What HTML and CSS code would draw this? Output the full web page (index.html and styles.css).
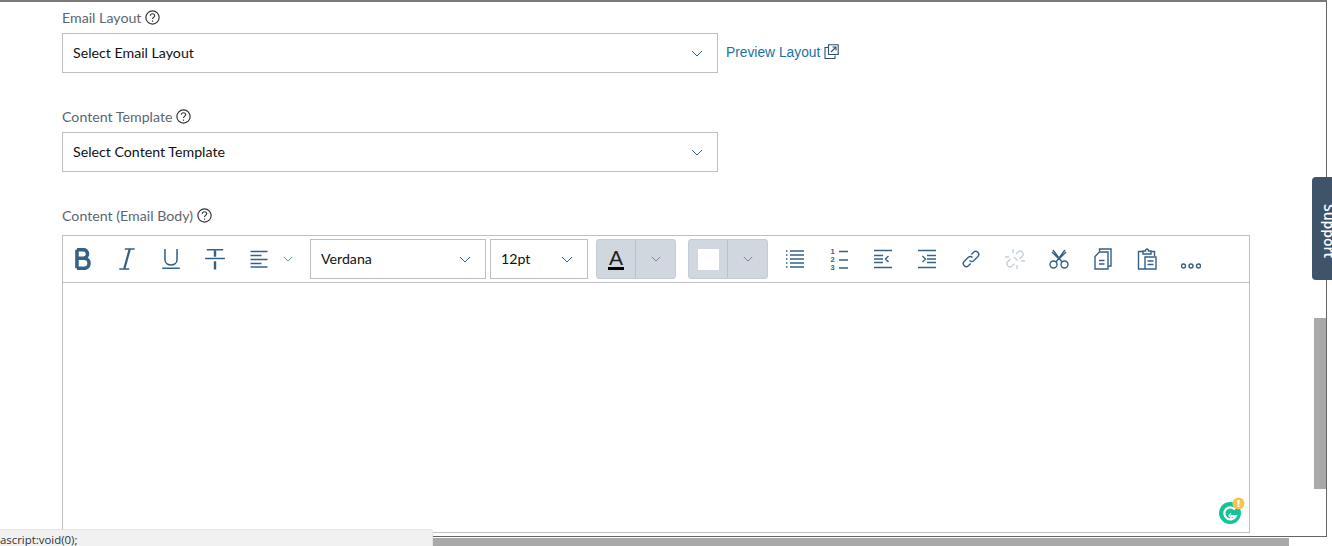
FILE: index.html
```html
<!DOCTYPE html>
<html lang="en">
<head>
<meta charset="utf-8">
<title>Email content</title>
<link rel="stylesheet" href="styles.css">
</head>
<body>
<div class="frame">
  <div class="field field-layout">
    <div class="label">Email Layout <svg class="help" viewBox="0 0 14 14"><circle cx="7" cy="7" r="6.2"/><path d="M5 5.400C5 4.200 5.900 3.500 7 3.500s2 .7 2 1.800c0 1.600-2 1.600-2 3.200"/><path d="M7 9.800v1.200"/></svg></div>
    <div class="row">
      <div class="select wide"><span>Select Email Layout</span><svg class="chev" viewBox="0 0 12 7"><path d="M1 1l5 5 5-5"/></svg></div>
      <a class="preview">Preview Layout <svg class="ext" viewBox="0 0 15 15"><path class="dark" d="M4 3.500H1v11h10v-3"/><path class="dark" d="M4.500.8h9.700v9.700H4.500z"/><path class="dark" d="M7 8l5-5M8.500 3H12v3.500"/></svg></a>
    </div>
  </div>
  <div class="field field-template">
    <div class="label">Content Template <svg class="help" viewBox="0 0 14 14"><circle cx="7" cy="7" r="6.2"/><path d="M5 5.400C5 4.200 5.900 3.500 7 3.500s2 .7 2 1.800c0 1.600-2 1.600-2 3.200"/><path d="M7 9.800v1.200"/></svg></div>
    <div class="row">
      <div class="select wide"><span>Select Content Template</span><svg class="chev" viewBox="0 0 12 7"><path d="M1 1l5 5 5-5"/></svg></div>
    </div>
  </div>
  <div class="field field-body">
    <div class="label label-body">Content (Email Body) <svg class="help" viewBox="0 0 14 14"><circle cx="7" cy="7" r="6.2"/><path d="M5 5.400C5 4.200 5.900 3.500 7 3.500s2 .7 2 1.800c0 1.600-2 1.600-2 3.200"/><path d="M7 9.800v1.200"/></svg></div>
    <div class="editor">
      <div class="toolbar">
        <button class="tool tool-first"><svg class="ico ico-lg" viewBox="0 0 20 20"><path class="bold" d="M4.500 1.500v17M4.500 1.500h5.500c5.500 0 5.500 7.800 0 7.800H4.500M4.500 9.300h6.500c6 0 6 9.200 0 9.200H4.500"/></svg></button>
        <button class="tool"><svg class="ico ico-lg" viewBox="0 0 20 20"><path d="M8 1h9M3 19h9"/><path class="med" d="M12.500 1L7.500 19"/></svg></button>
        <button class="tool"><svg class="ico ico-lg" viewBox="0 0 20 20"><path d="M4.500 1v9.500c0 6.500 11 6.500 11 0V1M2 18.500h16"/></svg></button>
        <button class="tool"><svg class="ico ico-lg" viewBox="0 0 20 20"><path d="M2.500 1.500h15M1 9.500h18"/><path class="thick" d="M10 2v6M10 12v7.500"/></svg></button>
        <button class="tool align"><svg class="ico" viewBox="0 0 20 20"><path d="M1.500 2.500h17M1.500 6.500h11M1.500 10.500h17M1.500 14.500h11M1.500 18h17"/></svg><svg class="chev small" viewBox="0 0 12 7"><path d="M1 1l5 5 5-5"/></svg></button>
        <div class="select font"><span>Verdana</span><svg class="chev" viewBox="0 0 12 7"><path d="M1 1l5 5 5-5"/></svg></div>
        <div class="select size"><span>12pt</span><svg class="chev" viewBox="0 0 12 7"><path d="M1 1l5 5 5-5"/></svg></div>
        <div class="split first"><span class="split-main"><span class="letter">A</span></span><span class="split-arrow"><svg class="chev tiny" viewBox="0 0 12 7"><path d="M1 1l5 5 5-5"/></svg></span></div>
        <div class="split"><span class="split-main"><span class="swatch"></span></span><span class="split-arrow"><svg class="chev tiny" viewBox="0 0 12 7"><path d="M1 1l5 5 5-5"/></svg></span></div>
        <div class="tools-end">
          <button class="tool"><svg class="ico" viewBox="0 0 20 20"><path d="M5 2h14M5 6h14M5 10h14M5 14h14M5 18h14"/><path class="dots" d="M1 2h2M1 6h2M1 10h2M1 14h2M1 18h2"/></svg></button>
          <button class="tool"><svg class="ico ico-num" viewBox="0 0 20 20"><path d="M10 2.500h9M10 11h9M10 19h9"/><text x="1.500" y="5" class="num">1</text><text x="1.500" y="13" class="num">2</text><text x="1.500" y="21" class="num">3</text></svg></button>
          <button class="tool"><svg class="ico" viewBox="0 0 20 20"><path d="M1 1.500h18M1 6.500h9M1 10h9M1 13.500h9M1 18.500h18M15.500 7l-3 3 3 3"/></svg></button>
          <button class="tool"><svg class="ico" viewBox="0 0 20 20"><path d="M1 1.500h18M10 6.500h9M10 10h9M10 13.500h9M1 18.500h18M5.500 7l3 3-3 3"/></svg></button>
          <button class="tool"><svg class="ico" viewBox="0 0 20 20"><path d="M8.500 11.500c1.500 1.500 3 1.300 4.200.2l4.200-4.200c2.600-2.800-1.500-6.900-4.300-4.300l-2.300 2.300M11.500 8.500c-1.500-1.500-3-1.300-4.200-.2l-4.200 4.200c-2.600 2.800 1.500 6.900 4.300 4.300l2.300-2.300"/></svg></button>
          <button class="tool faded"><svg class="ico" viewBox="0 0 20 20"><path d="M11 5l2-2c2.800-2.600 6.900 1.500 4.300 4.300L14.500 10M9 15l-2 2c-2.800 2.600-6.900-1.500-4.300-4.300L5.500 10M9 8l3.500 3.500M8 0v4M12 16v4M16 12h4M0 8h4"/></svg></button>
          <button class="tool"><svg class="ico" viewBox="0 0 20 20"><circle cx="4.500" cy="15.500" r="3.500"/><circle cx="15.500" cy="15.500" r="3.500"/><path d="M7 13L16 1M17 3l-7.500 7.500M13 13L4 1M3 3l7.500 7.500"/></svg></button>
          <button class="tool"><svg class="ico ico-tall" viewBox="0 0 20 22"><path d="M6.500 3.500V1h11.500v17H15"/><path d="M6.500 4h8.500v17H2V8.500zM6 12.500h5.500M6 16h5.500"/></svg></button>
          <button class="tool"><svg class="ico ico-tall" viewBox="0 0 20 22"><path d="M6 3.500H1.500V21h6M14 3.500h3.500V8M6 6V3h2.500c0-2.700 3-2.700 3 0H14v3zM8 9h11v12H8zM10.500 13h6M10.500 16.500h6"/></svg></button>
          <button class="tool"><svg class="ico" viewBox="0 0 20 20"><circle cx="2.500" cy="17" r="2"/><circle cx="10" cy="17" r="2"/><circle cx="17.500" cy="17" r="2"/></svg></button>
        </div>
      </div>
      <div class="edit-area">
        <div class="grammarly">
          <svg viewBox="0 0 28 28" width="28" height="28"><circle cx="12" cy="16" r="11" fill="#15c39a"/><path d="M17 12.500a6 6 0 1 0 .8 6.500H12.500" fill="none" stroke="#fff" stroke-width="2.200"/><path d="M13 16l-2 3 2.500 2" fill="none" stroke="#fff" stroke-width="1.200"/><circle cx="20.500" cy="6.500" r="6" fill="#f5c451"/><path d="M20.500 3v4.500M20.500 8.500v1.500" stroke="#fff" stroke-width="2"/></svg>
        </div>
      </div>
    </div>
  </div>
  <div class="scroll-v"><div class="thumb-v"></div></div>
</div>
<div class="support"><span>Support</span></div>
<div class="scroll-h"></div>
<div class="status">ascript:void(0);</div>
</body>
</html>
```
FILE: styles.css
```css
* { box-sizing: border-box; }
html, body { margin: 0; height: 546px; overflow: hidden; background: #fff; }
body { font-family: "Lato", "Liberation Sans", sans-serif; font-size: 14.200px; color: #000; position: relative; }
.frame { position: relative; width: 1327px; height: 537px; border-top: 2px solid #7a7a7a; border-right: 1px solid #666; border-bottom: 1px solid #666; padding-left: 62px; overflow: hidden; }
.field-layout { padding-top: 7px; }
.field-template { padding-top: 35px; }
.field-body { padding-top: 35px; }
.label { height: 24px; padding-bottom: 6px; display: flex; align-items: center; gap: 4px; color: #5c6670; line-height: 18px; }
.label-body { height: 28px; padding-bottom: 10px; }
.help { width: 15px; height: 15px; fill: none; stroke: #32363a; stroke-width: 1.100; margin-top: -1px; }
.row { display: flex; align-items: center; }
.select { display: flex; align-items: center; justify-content: space-between; height: 40px; border: 1px solid #bfbfbf; background: #fff; padding: 0 14px 0 10px; color: #111; }
.select span { margin-top: -1px; }
.wide { width: 656px; }
.chev { width: 12px; height: 7px; fill: none; stroke: #346187; stroke-width: 1; flex: none; }
.chev.small { stroke: #4c7a70; width: 10px; height: 6px; margin-left: 14px; }
.chev.tiny { stroke: #7a6a9a; width: 10px; height: 6px; }
.preview { margin-left: 8px; color: #1b72a6; display: flex; align-items: center; gap: 4px; font-family: "Liberation Sans", sans-serif; font-size: 13.800px; margin-top: -2px; }
.ext { width: 15px; height: 15px; fill: none; stroke-width: 1.100; margin-top: -1px; }
.dark { stroke: #32506b; }
.editor { width: 1188px; border: 1px solid #bfbfbf; height: 298px; }
.toolbar { display: flex; align-items: center; height: 47px; border-bottom: 1px solid #bfbfbf; }
.tool { width: 44px; height: 40px; padding: 0; border: 0; background: none; display: flex; align-items: center; justify-content: center; flex: none; }
.tool-first { margin-left: -2px; }
.ico { width: 20px; height: 20px; fill: none; stroke: #346187; stroke-width: 1.400; }
.ico-lg { width: 22px; height: 22px; }
.ico-tall { width: 20px; height: 22px; }
.ico-num { overflow: visible; }
.bold { stroke-width: 3.200; }
.med { stroke-width: 2; }
.thick { stroke-width: 2.200; }
.dots { stroke-dasharray: 1.500 1; }
.num { font: 700 7.500px "Liberation Sans", sans-serif; fill: #346187; stroke: none; }
.faded .ico { stroke: #c3d0dc; }
.align { width: 73px; justify-content: flex-start; padding-left: 12px; }
.font { width: 176px; }
.size { width: 98px; margin-left: 4px; }
.split { display: flex; width: 80px; height: 40px; margin-left: 12px; background: #d0d7de; border-radius: 3px; border: 1px solid #c5ccd3; }
.split.first { margin-left: 8px; }
.split-main { width: 39px; display: flex; align-items: center; justify-content: center; border-right: 1px solid #b9c1c9; }
.split-arrow { flex: 1; display: flex; align-items: center; justify-content: center; }
.letter { font-family: "Liberation Sans", sans-serif; font-size: 21px; line-height: 19px; border-bottom: 3px solid #000; padding: 0 1px; color: #222; }
.swatch { width: 21px; height: 21px; background: #fff; }
.tools-end { display: flex; margin-left: 5px; }
.edit-area { position: relative; height: 249px; }
.grammarly { position: absolute; left: 1155px; top: 214px; width: 28px; height: 28px; }
.scroll-v { position: absolute; right: 0; top: 0; bottom: 0; width: 13px; background: #fff; }
.thumb-v { position: absolute; top: 316px; left: 1px; width: 12px; height: 171px; background: #a9a9a9; }
.support { position: absolute; left: 1312px; top: 177px; width: 20px; height: 103px; background: #3f5468; border-radius: 4px 0 0 4px; overflow: hidden; color: #fff; }
.support span { position: absolute; left: 8px; top: 27px; writing-mode: vertical-rl; font-family: "Open Sans", sans-serif; font-size: 14px; font-weight: 600; line-height: 18px; }
.scroll-h { position: absolute; left: 433px; top: 538px; width: 856px; height: 8px; background: #a9a9a9; }
.status { position: absolute; left: 0; top: 529px; width: 433px; height: 17px; background: #f1f1f1; border-top: 1px solid #e4e4e4; border-right: 1px solid #e4e4e4; border-radius: 0 3px 0 0; font-family: "Open Sans", sans-serif; font-size: 11.400px; line-height: 20px; color: #333; white-space: nowrap; }
```
